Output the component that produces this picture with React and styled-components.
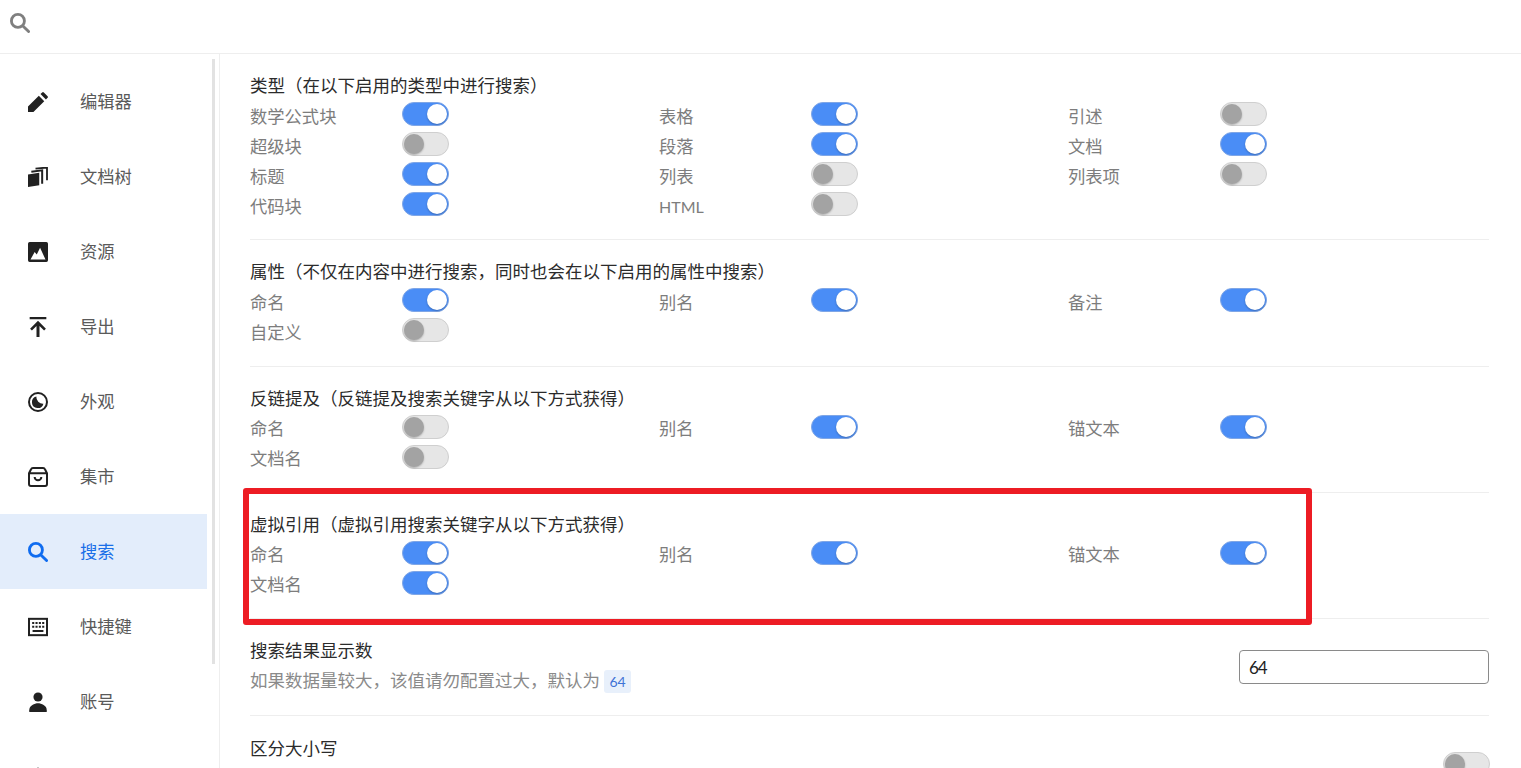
import React from "react";
import styled, { createGlobalStyle } from "styled-components";

const GlobalStyle = createGlobalStyle`
  html, body {
    margin: 0;
    height: 100%;
    overflow: hidden;
    background: #fff;
  }

  body {
    font-family: Lato, "Noto Sans CJK SC", sans-serif;
    color: #222;
    text-spacing-trim: space-all;
  }
`;

const Page = styled.div`
  height: 768px;
  overflow: hidden;
  position: relative;
`;

const TopBar = styled.div`
  height: 54px;
  border-bottom: 1px solid #eeeeee;
  padding: 13px 0 0 10px;
  box-sizing: border-box;
  color: #7f7f7f;

  svg {
    display: block;
    width: 20px;
    height: 20px;
  }
`;

const Body = styled.div`
  display: flex;
  height: 714px;
`;

const Sidebar = styled.nav`
  width: 219px;
  flex: none;
  border-right: 1px solid #eeeeee;
  position: relative;
  overflow: hidden;
  padding-top: 10px;
  box-sizing: content-box;
`;

const ScrollThumb = styled.div`
  position: absolute;
  left: 212px;
  top: 5px;
  width: 3px;
  height: 605px;
  background: #e2e2e2;
`;

const NavItem = styled.div`
  width: 207px;
  height: 75px;
  display: flex;
  align-items: center;
  padding-left: 28px;
  box-sizing: border-box;
  font-size: 17.3px;
  color: ${(p) => (p.$active ? "#1a6fe8" : "#5a5a5a")};
  background: ${(p) => (p.$active ? "#e3edfb" : "transparent")};

  svg {
    width: 20px;
    height: 20px;
    flex: none;
    margin-right: 32px;
    color: ${(p) => (p.$active ? "#0f6cf0" : "#212121")};
  }
`;

const NavLabel = styled.span`
  padding-bottom: 3px;
`;

const Content = styled.main`
  flex: 1;
  padding: 16px 32px 0 30px;
  min-width: 0;
`;

const Section = styled.section`
  border-bottom: 1px solid #eeeeee;
  padding-bottom: 19.2px;
  margin-bottom: 16.13px;
`;

const SectionTitle = styled.div`
  font-size: 17.5px;
  line-height: 28px;
  padding-top: 2px;
  color: #2b2b2b;
`;

const OptionGrid = styled.div`
  display: grid;
  grid-template-columns: repeat(3, 409px);
`;

const Option = styled.div`
  height: 30px;
  display: flex;
  align-items: center;
`;

const OptionLabel = styled.span`
  width: 152px;
  flex: none;
  font-size: ${(p) => (p.$latin ? "16px" : "17.3px")};
  padding-top: ${(p) => (p.$latin ? "3px" : "0")};
  color: #7d7d7d;
`;

const Toggle = styled.span`
  width: 47px;
  height: 24px;
  margin-top: -2px;
  border-radius: 12px;
  box-sizing: border-box;
  position: relative;
  flex: none;
  background: ${(p) => (p.$on ? "#4a8df6" : "#e6e6e6")};
  border: 1px solid ${(p) => (p.$on ? "#7fa6e6" : "#cfcfcf")};

  &::after {
    content: "";
    position: absolute;
    top: 1px;
    left: ${(p) => (p.$on ? "24px" : "1px")};
    width: 20px;
    height: 20px;
    border-radius: 50%;
    background: ${(p) => (p.$on ? "#fff" : "#a3a3a3")};
    box-shadow: 0 1px 2px rgba(0, 0, 0, 0.25);
  }
`;

const SettingRow = styled.div`
  display: flex;
  align-items: center;
  justify-content: space-between;
  min-height: ${(p) => p.$minHeight || 60}px;
`;

const SettingText = styled.div`
  align-self: flex-start;
`;

const EdgeToggle = styled(Toggle)`
  margin-right: -1px;
`;

const Description = styled.div`
  font-size: 17.5px;
  line-height: 28px;
  padding-top: 2px;
  color: #8a8a8a;
`;

const Code = styled.code`
  font-family: inherit;
  font-size: 14px;
  color: #3f73d6;
  background: #e8f0fb;
  padding: 3px 5.5px;
  border-radius: 3px;
  margin-left: 4px;
`;

const NumberInput = styled.div`
  width: 250px;
  height: 34px;
  margin-top: 2px;
  box-sizing: border-box;
  border: 1px solid #8a8a8a;
  border-radius: 4px;
  font-size: 17px;
  letter-spacing: -1px;
  line-height: 33px;
  padding-left: 9px;
  color: #222;
`;

const Highlight = styled.div`
  position: absolute;
  left: 243px;
  top: 488px;
  width: 1069px;
  height: 137px;
  box-sizing: border-box;
  border: 6px solid #ed1c24;
  border-radius: 3px;
  pointer-events: none;
`;

function Icon({ children }) {
  return (
    <svg viewBox="0 0 24 24" fill="currentColor" stroke="none">
      {children}
    </svg>
  );
}

const SearchIcon = () => (
  <Icon>
    <circle cx="9.5" cy="9.5" r="7.8" fill="none" stroke="currentColor" strokeWidth="3.4" />
    <path d="M15.5 15.5 22.3 22.3" fill="none" stroke="currentColor" strokeWidth="3.4" strokeLinecap="round" />
  </Icon>
);

const navItems = [
  {
    label: "编辑器",
    icon: (
      <Icon>
        <path d="M0 24v-6.5L13 4.5 19.5 11 6.5 24zM15 2.5l2-2a1.5 1.5 0 0 1 2 0l4.5 4.5a1.5 1.5 0 0 1 0 2l-2 2z" />
      </Icon>
    ),
  },
  {
    label: "文档树",
    icon: (
      <Icon>
        <path d="M0 9 13.5 7V22L0 24z" />
        <path d="M4 5.800 17 4V20" fill="none" stroke="currentColor" strokeWidth="2.4" />
        <path d="M9 2 22.800 .6V16" fill="none" stroke="currentColor" strokeWidth="2.2" />
      </Icon>
    ),
  },
  {
    label: "资源",
    icon: (
      <Icon>
        <path
          fillRule="evenodd"
          d="M2 0h20a2 2 0 0 1 2 2v20a2 2 0 0 1-2 2H2a2 2 0 0 1-2-2V2a2 2 0 0 1 2-2zM3 21h18L14.500 7l-4 8L8 12z"
        />
      </Icon>
    ),
  },
  {
    label: "导出",
    icon: (
      <Icon>
        <path d="M2 0h20v2.800H2zM12 4.500l9.500 9.500-2.200 2.200-5.500-5.500V24h-3.600V10.700l-5.500 5.500L2.500 14z" />
      </Icon>
    ),
  },
  {
    label: "外观",
    icon: (
      <Icon>
        <circle cx="12" cy="12" r="10.800" fill="none" stroke="currentColor" strokeWidth="2.400" />
        <path d="M10 5.500A7 7 0 1 0 18.500 14 8 8 0 0 1 10 5.500z" />
      </Icon>
    ),
  },
  {
    label: "集市",
    icon: (
      <Icon>
        <path
          d="M1.200 7.500 3.500 3Q4.200 1.200 6 1.200h12q1.800 0 2.500 1.800l2.300 4.500v13q0 2.300-2.300 2.300h-17Q1.200 22.800 1.200 20.500zM1.500 7.500h21M8 12a4 4 0 0 0 8 0"
          fill="none"
          stroke="currentColor"
          strokeWidth="2.400"
        />
      </Icon>
    ),
  },
  { label: "搜索", active: true, icon: <SearchIcon /> },
  {
    label: "快捷键",
    icon: (
      <Icon>
        <rect x="1.200" y="2.200" width="21.600" height="19.600" fill="none" stroke="currentColor" strokeWidth="2.400" />
        <path d="M5 6h2.500v2.500H5zM9 6h2.500v2.500H9zM13 6h2.500v2.500H13zM17 6h2.500v2.500H17zM5 10.500h2.500V13H5zM9 10.500h2.500V13H9zM13 10.500h2.500V13H13zM17 10.500h2.500V13H17zM5.500 15.500h13V18h-13z" />
      </Icon>
    ),
  },
  {
    label: "账号",
    icon: (
      <Icon>
        <circle cx="12" cy="6" r="5.500" />
        <path d="M1.500 24v-2C1.500 16 8 13.500 12 13.500S22.500 16 22.500 22v2z" />
      </Icon>
    ),
  },
  {
    icon: (
      <Icon>
        <path d="M12 0 24 24H0z" />
      </Icon>
    ),
  },
];

const sections = [
  {
    title: "类型（在以下启用的类型中进行搜索）",
    options: [
      ["数学公式块", true], ["表格", true], ["引述", false],
      ["超级块", false], ["段落", true], ["文档", true],
      ["标题", true], ["列表", false], ["列表项", false],
      ["代码块", true], ["HTML", false],
    ],
  },
  {
    title: "属性（不仅在内容中进行搜索，同时也会在以下启用的属性中搜索）",
    options: [
      ["命名", true], ["别名", true], ["备注", true],
      ["自定义", false],
    ],
  },
  {
    title: "反链提及（反链提及搜索关键字从以下方式获得）",
    options: [
      ["命名", false], ["别名", true], ["锚文本", true],
      ["文档名", false],
    ],
  },
  {
    title: "虚拟引用（虚拟引用搜索关键字从以下方式获得）",
    options: [
      ["命名", true], ["别名", true], ["锚文本", true],
      ["文档名", true],
    ],
  },
];

export default function App() {
  return (
    <Page>
      <GlobalStyle />
      <TopBar>
        <SearchIcon />
      </TopBar>
      <Body>
        <Sidebar>
          <ScrollThumb />
          {navItems.map((item, i) => (
            <NavItem key={i} $active={item.active}>
              {item.icon}
              {item.label && <NavLabel>{item.label}</NavLabel>}
            </NavItem>
          ))}
        </Sidebar>
        <Content>
          {sections.map((section) => (
            <Section key={section.title}>
              <SectionTitle>{section.title}</SectionTitle>
              <OptionGrid>
                {section.options.map(([label, on], i) => (
                  <Option key={label + i}>
                    <OptionLabel $latin={label === "HTML"}>{label}</OptionLabel>
                    <Toggle $on={on} />
                  </Option>
                ))}
              </OptionGrid>
            </Section>
          ))}
          <Section>
            <SettingRow>
              <SettingText>
                <SectionTitle>搜索结果显示数</SectionTitle>
                <Description>
                  如果数据量较大，该值请勿配置过大，默认为<Code>64</Code>
                </Description>
              </SettingText>
              <NumberInput>64</NumberInput>
            </SettingRow>
          </Section>
          <SettingRow $minHeight={65}>
            <SettingText>
              <SectionTitle>区分大小写</SectionTitle>
            </SettingText>
            <EdgeToggle />
          </SettingRow>
        </Content>
      </Body>
      <Highlight />
    </Page>
  );
}
